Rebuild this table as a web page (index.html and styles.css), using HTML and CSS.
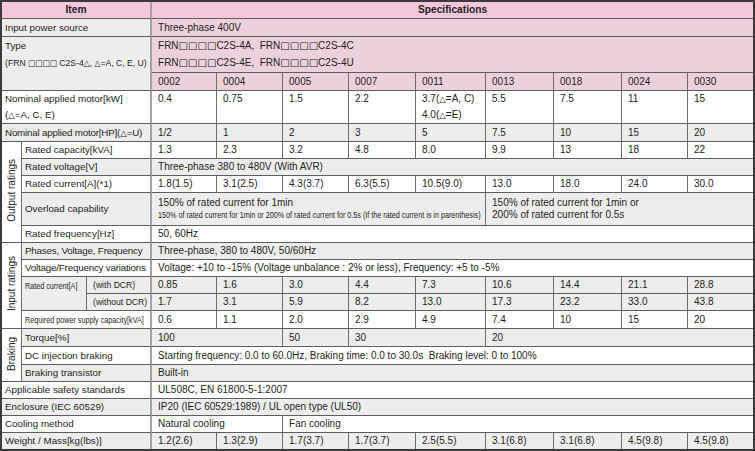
FILE: index.html
```html
<!DOCTYPE html>
<html>
<head>
<meta charset="utf-8">
<link rel="stylesheet" href="styles.css">
</head>
<body>
<div class="sheet">
<table class="spec">
<colgroup>
<col class="w-g"><col class="w-a"><col class="w-b">
<col class="w-1"><col class="w-2"><col class="w-3"><col class="w-4"><col class="w-5"><col class="w-6"><col class="w-7"><col class="w-8"><col class="w-9">
</colgroup>
<tbody>
<tr class="r-head">
<th colspan="3" class="div">Item</th>
<th colspan="9" class="nr">Specifications</th>
</tr>
<tr class="r18">
<td colspan="3" class="lab div gray">Input power source</td>
<td colspan="9" class="pink nr">Three-phase 400V</td>
</tr>
<tr class="r-type">
<td colspan="3" rowspan="2" class="lab div gray top">
<div class="ln">Type</div>
<div class="ln"><span class="cond c90">(FRN <span class="sq">□□□□</span> C2S-4<span class="tri">△</span>, <span class="tri">△</span>=A, C, E, U)</span></div>
</td>
<td colspan="9" class="pink nr top">
<div class="ln">FRN<span class="sq">□□□□</span>C2S-4A,&nbsp; FRN<span class="sq">□□□□</span>C2S-4C</div>
<div class="ln">FRN<span class="sq">□□□□</span>C2S-4E,&nbsp; FRN<span class="sq">□□□□</span>C2S-4U</div>
</td>
</tr>
<tr class="r18 pink">
<td>0002</td><td>0004</td><td>0005</td><td>0007</td><td>0011</td><td>0013</td><td>0018</td><td>0024</td><td class="nr">0030</td>
</tr>
<tr class="r-kw top">
<td colspan="3" class="lab div"><div class="ln">Nominal applied motor[kW]</div><div class="ln">(<span class="tri">△</span>=A, C, E)</div></td>
<td><div class="ln">0.4</div></td><td><div class="ln">0.75</div></td><td><div class="ln">1.5</div></td><td><div class="ln">2.2</div></td>
<td><div class="ln">3.7(<span class="tri">△</span>=A, C)</div><div class="ln">4.0(<span class="tri">△</span>=E)</div></td>
<td><div class="ln">5.5</div></td><td><div class="ln">7.5</div></td><td><div class="ln">11</div></td><td class="nr"><div class="ln">15</div></td>
</tr>
<tr class="r18 gray">
<td colspan="3" class="lab div tight">Nominal applied motor[HP](<span class="tri">△</span>=U)</td>
<td>1/2</td><td>1</td><td>2</td><td>3</td><td>5</td><td>7.5</td><td>10</td><td>15</td><td class="nr">20</td>
</tr>
<tr class="r17">
<td rowspan="5" class="grp"><span class="vt">Output ratings</span></td>
<td colspan="2" class="lab div">Rated capacity[kVA]</td>
<td>1.3</td><td>2.3</td><td>3.2</td><td>4.8</td><td>8.0</td><td>9.9</td><td>13</td><td>18</td><td class="nr">22</td>
</tr>
<tr class="r17 gray">
<td colspan="2" class="lab div">Rated voltage[V]</td>
<td colspan="9" class="nr">Three-phase 380 to 480V (With AVR)</td>
</tr>
<tr class="r17">
<td colspan="2" class="lab div">Rated current[A](*1)</td>
<td>1.8(1.5)</td><td>3.1(2.5)</td><td>4.3(3.7)</td><td>6.3(5.5)</td><td>10.5(9.0)</td><td>13.0</td><td>18.0</td><td>24.0</td><td class="nr">30.0</td>
</tr>
<tr class="r-over gray">
<td colspan="2" class="lab div">Overload capability</td>
<td colspan="5"><div class="ol">150% of rated current for 1min</div><div class="ol"><span class="cond c80 small">150% of rated current for 1min or 200% of rated current for 0.5s (If the rated current is in parenthesis)</span></div></td>
<td colspan="4" class="nr"><div class="ol">150% of rated current for 1min or</div><div class="ol">200% of rated current for 0.5s</div></td>
</tr>
<tr class="r17">
<td colspan="2" class="lab div">Rated frequency[Hz]</td>
<td colspan="9" class="nr">50, 60Hz</td>
</tr>
<tr class="r17 gray">
<td rowspan="5" class="grp"><span class="vt">Input ratings</span></td>
<td colspan="2" class="lab div tight">Phases, Voltage, Frequency</td>
<td colspan="9" class="nr">Three-phase, 380 to 480V, 50/60Hz</td>
</tr>
<tr class="r17">
<td colspan="2" class="lab div tight">Voltage/Frequency variations</td>
<td colspan="9" class="nr">Voltage: +10 to -15% (Voltage unbalance : 2% or less), Frequency: +5 to -5%</td>
</tr>
<tr class="r17 gray">
<td rowspan="2" class="lab top"><div class="ln17"><span class="cond c80 small">Rated current[A]</span></div></td>
<td class="lab div sub"><span class="cond c90">(with DCR)</span></td>
<td>0.85</td><td>1.6</td><td>3.0</td><td>4.4</td><td>7.3</td><td>10.6</td><td>14.4</td><td>21.1</td><td class="nr">28.8</td>
</tr>
<tr class="r17 gray">
<td class="lab div sub"><span class="cond c90">(without DCR)</span></td>
<td>1.7</td><td>3.1</td><td>5.9</td><td>8.2</td><td>13.0</td><td>17.3</td><td>23.2</td><td>33.0</td><td class="nr">43.8</td>
</tr>
<tr class="r18">
<td colspan="2" class="lab div"><span class="cond c80 small">Required power supply capacity[kVA]</span></td>
<td>0.6</td><td>1.1</td><td>2.0</td><td>2.9</td><td>4.9</td><td>7.4</td><td>10</td><td>15</td><td class="nr">20</td>
</tr>
<tr class="r18 gray">
<td rowspan="3" class="grp"><span class="vt">Braking</span></td>
<td colspan="2" class="lab div">Torque[%]</td>
<td colspan="2">100</td><td>50</td><td colspan="2">30</td><td colspan="4" class="nr">20</td>
</tr>
<tr class="r18">
<td colspan="2" class="lab div">DC injection braking</td>
<td colspan="9" class="nr">Starting frequency: 0.0 to 60.0Hz, Braking time: 0.0 to 30.0s&nbsp; Braking level: 0 to 100%</td>
</tr>
<tr class="r17 gray">
<td colspan="2" class="lab div">Braking transistor</td>
<td colspan="9" class="nr">Built-in</td>
</tr>
<tr class="r17">
<td colspan="3" class="lab div">Applicable safety standards</td>
<td colspan="9" class="nr">UL508C, EN 61800-5-1:2007</td>
</tr>
<tr class="r17 gray">
<td colspan="3" class="lab div">Enclosure (IEC 60529)</td>
<td colspan="9" class="nr">IP20 (IEC 60529:1989) / UL open type (UL50)</td>
</tr>
<tr class="r17">
<td colspan="3" class="lab div">Cooling method</td>
<td colspan="2">Natural cooling</td><td colspan="7" class="nr">Fan cooling</td>
</tr>
<tr class="r16 gray last">
<td colspan="3" class="lab div">Weight / Mass[kg(lbs)]</td>
<td>1.2(2.6)</td><td>1.3(2.9)</td><td>1.7(3.7)</td><td>1.7(3.7)</td><td>2.5(5.5)</td><td>3.1(6.8)</td><td>3.1(6.8)</td><td>4.5(9.8)</td><td class="nr">4.5(9.8)</td>
</tr>
</tbody>
</table>
</div>
</body>
</html>
```

FILE: styles.css
```css
* { box-sizing: border-box; }
html, body { margin: 0; padding: 0; background: #ffffff; }
body {
  font-family: "Liberation Sans", Arial, "DejaVu Sans", sans-serif;
  font-size: 10px;
  color: #231f20;
}
.sheet {
  width: 755px;
  height: 451px;
  border: 2px solid #3b3b3b;
  overflow: hidden;
  background: #ffffff;
}
.spec {
  width: 751px;
  table-layout: fixed;
  border-collapse: separate;
  border-spacing: 0;
}
.w-g { width: 20px; }
.w-a { width: 65px; }
.w-b { width: 65px; }
.w-1 { width: 65px; }
.w-2 { width: 66px; }
.w-3 { width: 66px; }
.w-4 { width: 67px; }
.w-5 { width: 70px; }
.w-6 { width: 68px; }
.w-7 { width: 68px; }
.w-8 { width: 66px; }
.w-9 { width: 65px; }

.spec th, .spec td {
  padding: 0 0 0 6px;
  border-right: 1px solid #6e6e6e;
  border-bottom: 1px solid #5e5e5e;
  white-space: nowrap;
  overflow: hidden;
  vertical-align: middle;
  text-align: left;
  line-height: 12px;
  font-weight: normal;
}
.spec th {
  background: #f4c7dd;
  font-weight: bold;
  text-align: center;
  padding: 0;
  font-size: 10.2px;
}
.spec .nr { border-right: none; }
.spec .div { border-right: 2px solid #a3a3a3; }
.spec .last td { border-bottom: none; }
.spec td.lab { padding-left: 3px; font-size: 9.8px; }
.spec td.sub { padding-left: 6px; }
.spec td.tight { letter-spacing: -0.2px; }
.spec td.grp {
  padding: 0;
  text-align: center;
  background: #ffffff;
  font-size: 10px;
}
.vt {
  display: inline-block;
  writing-mode: vertical-rl;
  transform: rotate(180deg);
  white-space: nowrap;
}

.r-head { height: 17px; }
.r18 { height: 18px; }
.r17 { height: 17px; }
.r16 { height: 16px; }
.r-type { height: 36px; }
.r-kw { height: 33px; }
.r-over { height: 33px; }

.gray td, td.gray { background: #ededed; }
.pink td, td.pink { background: #ecd0dc; }
.spec .grp { background: #ffffff; }
.spec .top, .top td { vertical-align: top; }

.ln { height: 17px; line-height: 17px; }
.r-kw .ln { height: 16px; line-height: 16px; }
.ln17 { height: 17px; line-height: 17px; }
.ol { height: 12px; line-height: 12px; }

.sq {
  font-family: "DejaVu Sans", sans-serif;
  font-size: 10px;
  letter-spacing: 0;
}
.tri {
  font-family: "DejaVu Sans", sans-serif;
  font-size: 8.5px;
  letter-spacing: 0;
}
.cond {
  display: inline-block;
  transform-origin: left center;
  white-space: nowrap;
}
.c90 { transform: scaleX(0.9); font-size: 9.6px; }
.c80 { transform: scaleX(0.8); }
.small { font-size: 9px; }
.c90 .sq { font-size: 8.5px; }
.c90 .tri { font-size: 8.5px; }
```
